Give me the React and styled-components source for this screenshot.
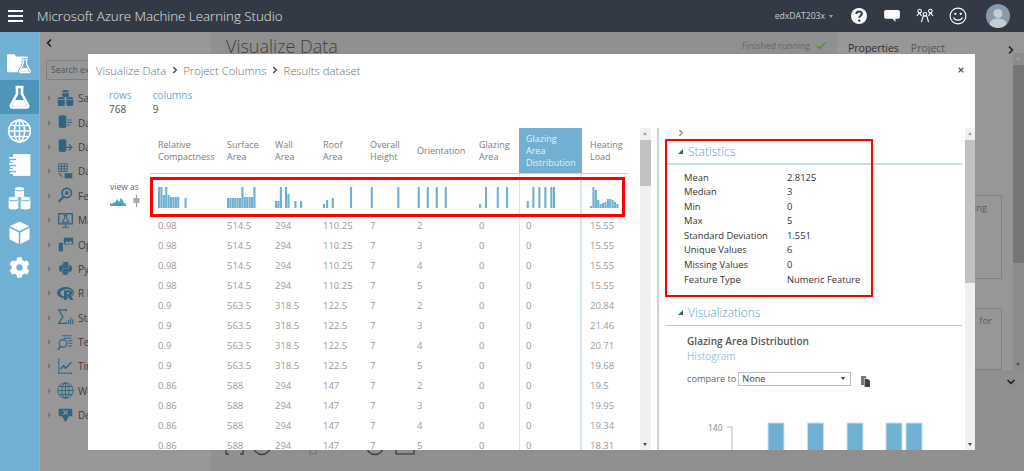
import styled, { createGlobalStyle } from "styled-components";
import { FaCog, FaPython, FaRProject } from "react-icons/fa";
import { ChevronLeft, ChevronRight, ChevronDown, Check, X } from "lucide-react";

const GlobalStyle = createGlobalStyle`
  html, body { margin: 0; padding: 0; height: 100%; overflow: hidden; background: #8f8f8f; }
  body { font-family: "Open Sans", "Liberation Sans", sans-serif; }
  #root { height: 100%; }
`;

// shared column widths of the results table: gutter + 9 columns
const TABLE_COLUMNS = "62px 69px 48px 48px 47px 47px 62px 48px 63px 47px";

const columns = [
  { name: ["Relative", "Compactness"], bars: [[0, 21], [2.4, 21], [4.8, 13], [7.2, 21], [9.6, 13], [12, 11], [14.4, 11], [16.8, 11], [19.2, 11], [26.5, 10]] },
  { name: ["Surface", "Area"], bars: [[0, 10], [2.4, 10], [4.8, 10], [7.2, 10], [9.6, 10], [12, 10], [14.4, 21], [16.8, 11], [19.2, 11], [21.6, 11], [24, 11], [26.4, 21]] },
  { name: ["Wall", "Area"], bars: [[0, 7], [2.4, 7], [4.8, 21], [10, 21], [12.4, 14], [19.4, 7], [25, 7]] },
  { name: ["Roof", "Area"], bars: [[0, 4], [3, 8], [8.7, 10], [27, 21]] },
  { name: ["Overall", "Height"], bars: [[0.7, 21], [27.3, 21]] },
  { name: ["Orientation"], bars: [[0.7, 21], [9.7, 21], [18.7, 21], [27.7, 21]] },
  { name: ["Glazing", "Area"], bars: [[0, 4], [6, 21], [17.7, 21], [27, 21]] },
  { name: ["Glazing", "Area", "Distribution"], selected: true, bars: [[0.7, 7], [6.3, 21], [12.3, 21], [18.3, 21], [24.3, 21], [26.9, 21]] },
  { name: ["Heating", "Load"], bars: [[0, 2], [2.4, 21], [4.8, 18], [7.2, 8], [9.6, 4], [12, 5], [14.4, 6], [16.8, 9], [19.2, 9], [21.6, 8], [24, 6], [26.4, 4]] },
];

const rows = [
  ["0.98", "514.5", "294", "110.25", "7", "2", "0", "0", "15.55"],
  ["0.98", "514.5", "294", "110.25", "7", "3", "0", "0", "15.55"],
  ["0.98", "514.5", "294", "110.25", "7", "4", "0", "0", "15.55"],
  ["0.98", "514.5", "294", "110.25", "7", "5", "0", "0", "15.55"],
  ["0.9", "563.5", "318.5", "122.5", "7", "2", "0", "0", "20.84"],
  ["0.9", "563.5", "318.5", "122.5", "7", "3", "0", "0", "21.46"],
  ["0.9", "563.5", "318.5", "122.5", "7", "4", "0", "0", "20.71"],
  ["0.9", "563.5", "318.5", "122.5", "7", "5", "0", "0", "19.68"],
  ["0.86", "588", "294", "147", "7", "2", "0", "0", "19.5"],
  ["0.86", "588", "294", "147", "7", "3", "0", "0", "19.95"],
  ["0.86", "588", "294", "147", "7", "4", "0", "0", "19.34"],
  ["0.86", "588", "294", "147", "7", "5", "0", "0", "18.31"],
];

const statistics = [
  ["Mean", "2.8125"],
  ["Median", "3"],
  ["Min", "0"],
  ["Max", "5"],
  ["Standard Deviation", "1.551"],
  ["Unique Values", "6"],
  ["Missing Values", "0"],
  ["Feature Type", "Numeric Feature"],
];

const Cylinders = () => (
  <svg viewBox="0 0 22 22" width="100%" height="100%" fill="currentColor">
    <ellipse cx="11" cy="1.600" rx="4.200" ry="1.500" />
    <path d="M6.800 2.800c0 1.700 8.400 1.700 8.400 0v5.400c0 1.500-8.400 1.500-8.400 0z" />
    <ellipse cx="5.500" cy="10.500" rx="4.500" ry="1.600" />
    <path d="M1 11.800c0 1.800 9 1.800 9 0v7.500c0 1.800-9 1.800-9 0z" />
    <ellipse cx="16.500" cy="10.500" rx="4.500" ry="1.600" />
    <path d="M12 11.800c0 1.800 9 1.800 9 0v7.500c0 1.800-9 1.800-9 0z" />
  </svg>
);

const FlaskShape = () => (
  <svg viewBox="0 0 22 24" width="100%" height="100%">
    <path d="M7 2h8M8.500 2v7L2.500 20c-.7 1.400 0 2.500 1.500 2.500h14c1.500 0 2.200-1.100 1.500-2.500L13.500 9V2" fill="none" stroke="currentColor" strokeWidth="2.600" strokeLinejoin="round" />
    <path d="M6.500 15h9l3 6.500H3.500z" fill="currentColor" />
  </svg>
);

const FolderFlask = () => (
  <svg viewBox="0 0 27 21" width="100%" height="100%" fill="currentColor">
    <path d="M0 2.500C0 1.500.7 1 1.500 1H8l2 2.500h11c1 0 1.500.6 1.500 1.500v14c0 .8-.6 1.500-1.500 1.500H1.500C.6 20.500 0 19.800 0 19z" />
    <path d="M16 7h6M17.500 7v4.500l-4 7.500c-.5 1 0 1.800 1 1.800h9.500c1 0 1.500-.8 1-1.800l-4-7.500V7" fill="#6fb0d3" stroke="#6fb0d3" strokeWidth="3.200" />
    <path d="M16 7h6M17.500 7v4.500l-4 7.500c-.5 1 0 1.800 1 1.800h9.500c1 0 1.500-.8 1-1.800l-4-7.500V7" fill="none" stroke="currentColor" strokeWidth="1.300" />
    <path d="M16 16h6l2 4h-10z" />
  </svg>
);

const GlobeLines = ({ weight = 1.700 }) => (
  <svg viewBox="0 0 26 26" width="100%" height="100%" fill="none" stroke="currentColor" strokeWidth={weight}>
    <circle cx="13" cy="13" r="11.800" />
    <ellipse cx="13" cy="13" rx="5.500" ry="11.800" />
    <path d="M13 1v24M1.200 13h23.600M3 7h20M3 19h20" />
  </svg>
);

const Notebook = () => (
  <svg viewBox="0 0 22 22" width="100%" height="100%">
    <path d="M5 1h16v20H5z" fill="currentColor" />
    <path d="M1.500 4.500h6c1.500 0 1.500 3 0 3h-5M1.500 10h6c1.500 0 1.500 3 0 3h-5M1.500 15.500h6c1.500 0 1.500 3 0 3h-5" fill="#6fb0d3" stroke="currentColor" strokeWidth="1.600" />
  </svg>
);

const Cube = () => (
  <svg viewBox="0 0 22 25" width="100%" height="100%" fill="currentColor">
    <path d="M11 .5l10 5-10 5-10-5z" />
    <path d="M.5 7l9.700 5v12L.5 19zM21.500 7l-9.700 5v12l9.700-5z" />
  </svg>
);

const CopyPages = () => (
  <svg viewBox="0 0 9 11" width="9" height="11">
    <path d="M0 0h4.500l1 1v1.500H3V9H0z" fill="#777" />
    <path d="M3.500 3H7l2 2v6H3.500z" fill="#444" />
  </svg>
);

const PaletteIcon = ({ kind }) => {
  if (kind === "cylinders") return <Cylinders />;
  if (kind === "python") return <FaPython size={15} />;
  if (kind === "r") return <FaRProject size={17} />;
  if (kind === "globe") return <GlobeLines weight={1.500} />;
  const shapes = {
    lines: <><path d="M2 3c0-2 9-2 9 0v12c0 2-9 2-9 0z" fill="currentColor" /><path d="M12 7h5M12 10h6M12 13h4" stroke="currentColor" strokeWidth="1.300" /></>,
    arrow: <><path d="M2 3c0-2 9-2 9 0v12c0 2-9 2-9 0z" fill="currentColor" /><path d="M10 11h7M14 7.500l3.500 3.500-3.500 3.500" fill="none" stroke="currentColor" strokeWidth="1.500" /></>,
    table: <><path d="M2 1h10v9H2zM2 4h10M2 7h10M5.300 1v9M8.600 1v9" fill="none" stroke="currentColor" strokeWidth="1" /><path d="M9 12h9v6H9z" fill="currentColor" /><path d="M2 12l4 4" stroke="currentColor" strokeWidth="1.400" /></>,
    search: <><circle cx="11.500" cy="7" r="5.500" fill="none" stroke="currentColor" strokeWidth="2" /><circle cx="11.500" cy="7" r="2.200" fill="currentColor" /><path d="M7.500 11.500L2 17.500" stroke="currentColor" strokeWidth="2.600" /></>,
    monitor: <><path d="M2 2h16v12H2z" fill="none" stroke="currentColor" strokeWidth="1.600" /><path d="M8 4h4M9 4v3l-3 5h8l-3-5V4M10 14v3M6 18h8" fill="none" stroke="currentColor" strokeWidth="1.300" /></>,
    phone: <><path d="M2 8h5v10H2z" fill="currentColor" /><path d="M8 2h11v8H8z" fill="currentColor" /><path d="M9 9l3-3 2 2 2-3 2 4z" fill="#979797" /></>,
    sigma: <><path d="M11 3V1H2l5 8-5 8h9v-2" fill="none" stroke="currentColor" strokeWidth="1.500" /><path d="M13 13h1.300v5H13zM15.500 10h1.300v8h-1.300zM18 12h1.300v6H18z" fill="currentColor" /></>,
    text: <><circle cx="7" cy="11" r="4.500" fill="none" stroke="currentColor" strokeWidth="1.500" /><path d="M4 15l-3 3.500" stroke="currentColor" strokeWidth="2" /><path d="M6 2h11M8 5h9M13 8h5M13 11h5M13 14h5" stroke="currentColor" strokeWidth="1.200" /></>,
    chart: <><path d="M2 1v17h16" fill="none" stroke="currentColor" strokeWidth="1.600" strokeDasharray="2 .8" /><path d="M4 13l4-4 2 3 7-7" fill="none" stroke="currentColor" strokeWidth="1.800" /></>,
    shield: <><path d="M2 2h16v9h-4l-4 7-4-7H2z" fill="currentColor" /><path d="M7.500 4l5 5M12.500 4l-5 5" stroke="#979797" strokeWidth="1.500" /></>,
  };
  return <svg viewBox="0 0 20 20" width="100%" height="100%">{shapes[kind]}</svg>;
};

// only the part of each label left of the modal is readable in the picture
const paletteItems = [
  ["cylinders", "Sa"],
  ["lines", "Da"],
  ["arrow", "Da"],
  ["table", "Da"],
  ["search", "Fe"],
  ["monitor", "Ma"],
  ["phone", "Op"],
  ["python", "Py"],
  ["r", "R L"],
  ["sigma", "Sta"],
  ["text", "Tex"],
  ["chart", "Tim"],
  ["globe", "We"],
  ["shield", "De"],
];

const railItems = [
  [<FolderFlask key="a" />, false],
  [<FlaskShape key="b" />, true],
  [<GlobeLines key="c" />, false],
  [<Notebook key="d" />, false],
  [<Cylinders key="e" />, false],
  [<Cube key="f" />, false],
  [<FaCog key="g" size={21} />, false],
];

function Histogram({ bars }) {
  return (
    <svg width="31" height="21" viewBox="0 0 31 21">
      {bars.map(([x, h]) => (
        <rect key={x} x={x} y={21 - h} width="2.100" height={h} fill="#6eafd2" />
      ))}
    </svg>
  );
}

function Scrollbar({ $thumbTop, $thumbHeight, $width }) {
  return (
    <ScrollTrack $width={$width}>
      <UpArrow />
      <ScrollThumb $top={$thumbTop} $height={$thumbHeight} />
      <DownArrow />
    </ScrollTrack>
  );
}

export default function App() {
  return (
    <>
      <GlobalStyle />
      <Page>
        <TopBar>
          <Burger><span /><span /><span /></Burger>
          <AppTitle>Microsoft Azure Machine Learning Studio</AppTitle>
          <Account>edxDAT203x</Account>
          <Caret />
          <TopIcons>
            <TopIcon>
              <svg viewBox="0 0 18 18" width="18" height="18">
                <circle cx="9" cy="9" r="8" fill="#fff" />
                <path d="M6.300 7c0-3.400 5.600-3.400 5.600-.3 0 2-2.700 2-2.700 4" fill="none" stroke="#323a45" strokeWidth="2" />
                <circle cx="9.200" cy="13.500" r="1.200" fill="#323a45" />
              </svg>
            </TopIcon>
            <TopIcon>
              <svg viewBox="0 0 18 16" width="16" height="14">
                <path d="M2 1h14c1 0 2 .8 2 2v6c0 1-1 2-2 2h-3v3.500L9.500 11H2c-1 0-2-1-2-2V3c0-1.200 1-2 2-2z" fill="#fff" />
              </svg>
            </TopIcon>
            <TopIcon>
              <svg viewBox="0 0 20 18" width="18" height="16" fill="none" stroke="#fff" strokeWidth="1.200">
                <circle cx="4" cy="3.500" r="2" /><circle cx="10" cy="7" r="2" /><circle cx="16" cy="3.500" r="2" />
                <path d="M4 5.500L6 9M16 5.500L14 9M8 9l-2 7M12 9l2 7M8.500 9h3M1 9l2.500-3.500M19 9l-2.500-3.500" />
              </svg>
            </TopIcon>
            <TopIcon>
              <svg viewBox="0 0 18 18" width="18" height="18" fill="none" stroke="#fff" strokeWidth="1.100">
                <circle cx="9" cy="9" r="7.900" />
                <path d="M4.500 10.500c1.500 3.500 7.500 3.500 9 0" />
                <circle cx="6.300" cy="6.800" r=".6" fill="#fff" /><circle cx="11.700" cy="6.800" r=".6" fill="#fff" />
              </svg>
            </TopIcon>
          </TopIcons>
          <Avatar>
            <svg viewBox="0 0 24 24" width="24" height="24">
              <circle cx="12" cy="9.500" r="4.500" fill="#c6ccd4" />
              <path d="M3.500 21c0-4.500 4-6.500 8.500-6.500s8.500 2 8.500 6.500c-2 1.800-5 3-8.500 3s-6.500-1.200-8.500-3z" fill="#c6ccd4" />
            </svg>
          </Avatar>
        </TopBar>

        <Workspace>
          <Rail>
            {railItems.map(([icon, active], i) => (
              <RailItem key={i} $active={active}>
                <RailGlyph>{icon}</RailGlyph>
              </RailItem>
            ))}
          </Rail>

          <Palette>
            <PaletteCollapse><ChevronLeft size={12} strokeWidth={3.500} /></PaletteCollapse>
            <PaletteSearch>Search ex</PaletteSearch>
            <PaletteList>
              {paletteItems.map(([kind, label]) => (
                <PaletteRow key={kind}>
                  <PaletteTriangle />
                  <PaletteGlyph><PaletteIcon kind={kind} /></PaletteGlyph>
                  <span>{label}</span>
                </PaletteRow>
              ))}
            </PaletteList>
          </Palette>

          <Canvas>
            <CanvasHead>
              <CanvasTitle>Visualize Data</CanvasTitle>
              <RunStatus>Finished running</RunStatus>
              <Check size={12} strokeWidth={3.500} color="#5f8f33" />
            </CanvasHead>
            <CanvasTools>
              <svg viewBox="0 0 200 20" width="200" height="20" fill="none" stroke="#3f3f3f" strokeWidth="1.300">
                <path d="M1 4v14h3M15 18h3V4" />
                <circle cx="37" cy="10" r="8.500" />
                <rect x="85" y="8" width="6" height="10" stroke="#777" />
                <circle cx="150" cy="10" r="8.500" />
                <rect x="171" y="4" width="18" height="14" />
              </svg>
            </CanvasTools>
          </Canvas>

          <SideColumn>
            <SidePanel>
              <SideTabs>
                <SideTab $active>Properties</SideTab>
                <SideTab>Project</SideTab>
                <SideChevron><ChevronRight size={12} strokeWidth={3.500} /></SideChevron>
              </SideTabs>
              <SideScroller>
                <SideBody>
                  <SideCard $height={84} $gap={142} $inset={14}>ing</SideCard>
                  <SideCard $height={62} $gap={29} $inset={9}>for</SideCard>
                </SideBody>
                <Scrollbar $width={11} $thumbTop={1} $thumbHeight={198} />
              </SideScroller>
            </SidePanel>
            <SideFoot><ChevronDown size={12} strokeWidth={3.500} /></SideFoot>
          </SideColumn>
        </Workspace>

        <Modal>
          <ModalHead>
            <Crumb>Visualize Data</Crumb>
            <CrumbArrow><ChevronRight size={10} strokeWidth={3.500} /></CrumbArrow>
            <Crumb>Project Columns</Crumb>
            <CrumbArrow><ChevronRight size={10} strokeWidth={3.500} /></CrumbArrow>
            <Crumb>Results dataset</Crumb>
            <CloseButton><X size={8} strokeWidth={3.500} /></CloseButton>
          </ModalHead>
          <Counts>
            <Count>
              <CountLabel>rows</CountLabel>
              <CountValue>768</CountValue>
            </Count>
            <Count>
              <CountLabel>columns</CountLabel>
              <CountValue>9</CountValue>
            </Count>
          </Counts>

          <ModalBody>
            <TablePane>
              <TableRow>
                <span />
                {columns.map((c) => (
                  <HeadCell key={c.name.join(" ")} $selected={c.selected}>
                    <div>{c.name.map((line) => <div key={line}>{line}</div>)}</div>
                  </HeadCell>
                ))}
              </TableRow>
              <TableRow>
                <ViewAs>
                  <ViewAsLabel>view as</ViewAsLabel>
                  <ViewAsIcons>
                    <svg viewBox="0 0 16 9" width="16" height="9">
                      <path d="M0 9V6l2 1 2-2 1 1 2-4 2 3 2-4 2 3 1 2 2 1v2z" fill="#4f9fcc" />
                    </svg>
                    <svg viewBox="0 0 7 12" width="7" height="12">
                      <path d="M3.500 0v12" stroke="#999" />
                      <rect x="0.500" y="3" width="6" height="5" fill="#aaa" />
                    </svg>
                  </ViewAsIcons>
                </ViewAs>
                {columns.map((c) => (
                  <BarCell key={c.name.join(" ")} $selected={c.selected}>
                    <Histogram bars={c.bars} />
                  </BarCell>
                ))}
              </TableRow>
              {rows.map((row, i) => (
                <TableRow key={i}>
                  <span />
                  {row.map((value, j) => (
                    <DataCell key={j} $selected={columns[j].selected}>{value}</DataCell>
                  ))}
                </TableRow>
              ))}
              <ColumnsHighlight />
            </TablePane>

            <Scrollbar $width={11} $thumbTop={1} $thumbHeight={46} />
            <PaneDivider />

            <DetailPane>
              <DetailChevron><ChevronRight size={10} strokeWidth={3} /></DetailChevron>
              <SectionHead>
                <SectionTriangle />
                <SectionTitle>Statistics</SectionTitle>
              </SectionHead>
              <StatList>
                {statistics.map(([label, value]) => (
                  <StatRow key={label}>
                    <span>{label}</span>
                    <span>{value}</span>
                  </StatRow>
                ))}
              </StatList>
              <SectionHead $strong>
                <SectionTriangle />
                <SectionTitle>Visualizations</SectionTitle>
              </SectionHead>
              <VizBlock>
                <VizName>Glazing Area Distribution</VizName>
                <VizKind>Histogram</VizKind>
                <CompareRow>
                  <span>compare to</span>
                  <CompareSelect>
                    None
                    <SelectCaret />
                  </CompareSelect>
                  <CopyIcon><CopyPages /></CopyIcon>
                </CompareRow>
                <ChartArea>
                  <AxisLabel>140</AxisLabel>
                  <svg viewBox="0 0 210 30" width="210" height="30">
                    <path d="M0 5h5M5 5v25" stroke="#bbb" fill="none" />
                    {[41, 80.500, 120, 159, 179].map((x) => (
                      <rect key={x} x={x} y="1" width="16" height="29" fill="#6fb0d3" stroke="#c9e2f0" />
                    ))}
                  </svg>
                </ChartArea>
              </VizBlock>
              <StatsHighlight />
            </DetailPane>

            <Scrollbar $width={10} $thumbTop={1} $thumbHeight={143} />
          </ModalBody>
        </Modal>
      </Page>
    </>
  );
}

const Page = styled.div`
  position: relative;
  width: 1024px;
  height: 471px;
  overflow: hidden;
  display: flex;
  flex-direction: column;
  background: #8f8f8f;
`;

const TopBar = styled.header`
  height: 32px;
  flex: none;
  display: flex;
  align-items: center;
  background: #333a45;
  color: #fff;
`;

const Burger = styled.div`
  width: 15px;
  margin-left: 8px;
  display: flex;
  flex-direction: column;
  gap: 3px;

  span {
    display: block;
    height: 2px;
    background: #fff;
  }
`;

const AppTitle = styled.div`
  margin-left: 14px;
  font-size: 13.3px;
  font-weight: 300;
  color: #e4e6e8;
  white-space: nowrap;
`;

const Account = styled.div`
  margin-left: auto;
  font-size: 8.6px;
  color: #c9ccd0;
`;

const Caret = styled.span`
  margin-left: 4px;
  border-left: 2.5px solid transparent;
  border-right: 2.5px solid transparent;
  border-top: 3px solid #9aa0a8;
`;

const TopIcons = styled.div`
  display: flex;
  margin-left: 9px;
`;

const TopIcon = styled.div`
  width: 33px;
  display: flex;
  justify-content: center;
  align-items: center;
`;

const Avatar = styled.div`
  width: 24px;
  height: 24px;
  margin: 0 14px 0 12px;
  border-radius: 50%;
  overflow: hidden;
  background: #8799ad;
`;

const Workspace = styled.div`
  flex: 1;
  min-height: 0;
  display: flex;
`;

const Rail = styled.nav`
  width: 39px;
  flex: none;
  padding-top: 14px;
  background: #6fb0d3;
  border-right: 1px solid #a9a9a9;
`;

const RailItem = styled.div`
  height: 34px;
  display: flex;
  align-items: center;
  justify-content: center;
  color: #fff;
  background: ${({ $active }) => ($active ? "#4f94b9" : "transparent")};
`;

const RailGlyph = styled.div`
  width: 25px;
  height: 24px;
  display: flex;
  align-items: center;
  justify-content: center;
`;

const Palette = styled.aside`
  width: 171px;
  flex: none;
  padding: 5px 0 0 6px;
  box-sizing: border-box;
  background: #979797;
  color: #3e3e3e;
  font-size: 10px;
  overflow: hidden;
`;

const PaletteCollapse = styled.div`
  height: 12px;
  color: #222;
  margin-left: -3px;
`;

const PaletteSearch = styled.div`
  height: 20px;
  margin-top: 11px;
  padding-left: 4px;
  line-height: 18px;
  width: 155px;
  box-sizing: border-box;
  border: 1px solid #808080;
  color: #555;
  font-size: 8.5px;
  white-space: nowrap;
`;

const PaletteList = styled.div`
  margin-top: 6px;
`;

const PaletteRow = styled.div`
  height: 24.4px;
  display: flex;
  align-items: center;
  white-space: nowrap;
`;

const PaletteTriangle = styled.span`
  border-top: 3px solid transparent;
  border-bottom: 3px solid transparent;
  border-left: 3px solid #787878;
  margin-left: 2px;
`;

const PaletteGlyph = styled.div`
  width: 17px;
  height: 17px;
  margin: 0 4px 0 6px;
  color: #33647f;
  display: flex;
  align-items: center;
  justify-content: center;
`;

const Canvas = styled.main`
  width: 626px;
  flex: none;
  display: flex;
  flex-direction: column;
  background: #8f8f8f;
`;

const CanvasHead = styled.div`
  display: flex;
  align-items: center;
  padding: 2px 10px 0 15px;
`;

const CanvasTitle = styled.h1`
  margin: 0;
  font-size: 18px;
  font-weight: 300;
  color: #3f3f3f;
`;

const RunStatus = styled.span`
  margin: 0 5px 0 auto;
  font-size: 8.7px;
  color: #666;
`;

const CanvasTools = styled.div`
  margin: auto 0 15px 14px;
  height: 20px;
`;

const SideColumn = styled.div`
  flex: 1;
  display: flex;
  flex-direction: column;
`;

const SidePanel = styled.div`
  height: 338px;
  display: flex;
  flex-direction: column;
  background: #979797;
`;

const SideTabs = styled.div`
  display: flex;
  align-items: center;
  height: 21px;
  flex: none;
  padding: 10px 7px 0 11px;
  box-sizing: border-box;
  gap: 12px;
`;

const SideTab = styled.span`
  font-size: 10.5px;
  color: ${({ $active }) => ($active ? "#2e2e2e" : "#555")};
`;

const SideChevron = styled.span`
  margin: -5px 0 0 auto;
  color: #222;
  height: 12px;
`;

const SideScroller = styled.div`
  flex: 1;
  min-height: 0;
  display: flex;
`;

const SideBody = styled.div`
  flex: 1;
  min-width: 0;
`;

const SideCard = styled.div`
  height: ${({ $height }) => $height}px;
  margin: ${({ $gap }) => $gap}px 11px 0 -10px;
  box-sizing: border-box;
  border: 1px solid #808080;
  padding: 5px ${({ $inset }) => $inset}px 0 0;
  text-align: right;
  font-size: 9.5px;
  color: #5a5a5a;
`;

const SideFoot = styled.div`
  display: flex;
  justify-content: flex-end;
  padding: 6px 7px 0 0;
  color: #222;
`;

const ScrollTrack = styled.div`
  position: relative;
  width: ${({ $width }) => $width}px;
  flex: none;
  padding: 11px 0;
  box-sizing: border-box;
  background: #f0f0f0;

  ${SidePanel} & {
    background: #8c8c8c;
  }
`;

const ScrollThumb = styled.div`
  height: ${({ $height }) => $height}px;
  margin-top: ${({ $top }) => $top}px;
  background: #c2c2c2;

  ${SidePanel} & {
    background: #767676;
  }
`;

const UpArrow = styled.span`
  position: absolute;
  top: 4px;
  left: 50%;
  margin-left: -2.5px;
  border-left: 2.5px solid transparent;
  border-right: 2.5px solid transparent;
  border-bottom: 3px solid #a3a3a3;
`;

const DownArrow = styled.span`
  position: absolute;
  bottom: 4px;
  left: 50%;
  margin-left: -2.5px;
  border-left: 2.5px solid transparent;
  border-right: 2.5px solid transparent;
  border-top: 3px solid #505050;
`;

const Modal = styled.section`
  position: absolute;
  top: 54px;
  left: 88px;
  width: 887px;
  height: 396px;
  display: flex;
  flex-direction: column;
  background: #fff;
  overflow: hidden;
`;

const ModalHead = styled.div`
  height: 32px;
  flex: none;
  padding-left: 8px;
  display: flex;
  align-items: center;
  color: #6d6d6d;
`;

const Crumb = styled.span`
  font-size: 11.3px;
  font-weight: 300;
`;

const CrumbArrow = styled.span`
  display: flex;
  margin: 0 3.5px;
  color: #444;
`;

const CloseButton = styled.span`
  margin-left: auto;
  margin-right: 10px;
  display: flex;
  color: #555;
`;

const Counts = styled.div`
  height: 42px;
  flex: none;
  box-sizing: border-box;
  padding: 2px 0 0 21px;
  display: flex;
  gap: 21px;
`;

const Count = styled.div`
  font-size: 10px;
  line-height: 14px;
`;

const CountLabel = styled.div`
  color: #6aaad0;
`;

const CountValue = styled.div`
  color: #555;
`;

const ModalBody = styled.div`
  flex: 1;
  min-height: 0;
  display: flex;
`;

const TablePane = styled.div`
  position: relative;
  width: 552px;
  flex: none;
  overflow: hidden;
`;

const TableRow = styled.div`
  display: grid;
  grid-template-columns: ${TABLE_COLUMNS};
  width: 541px;
`;

const HeadCell = styled.div`
  height: 46px;
  box-sizing: border-box;
  padding-left: ${({ $selected }) => ($selected ? "7px" : "8px")};
  display: flex;
  align-items: center;
  font-size: 9px;
  line-height: 12px;
  border-bottom: 1px solid #b9d6e6;
  color: ${({ $selected }) => ($selected ? "#e8f2f8" : "#7c7c7c")};
  background: ${({ $selected }) => ($selected ? "#72afd0" : "transparent")};
`;

const BarCell = styled.div`
  height: 42px;
  box-sizing: border-box;
  padding: 13px 0 0 8px;
  border-left: ${({ $selected }) => ($selected ? "1px solid #d3e7f2" : "none")};
  border-right: ${({ $selected }) => ($selected ? "2px solid #d3e7f2" : "none")};
  ${({ $selected }) => $selected && "padding-left: 6px;"}
`;

const DataCell = styled.div`
  height: 20px;
  line-height: 20px;
  box-sizing: border-box;
  padding-left: ${({ $selected }) => ($selected ? "6px" : "8px")};
  font-size: 9.5px;
  color: #9a9a9a;
  border-left: ${({ $selected }) => ($selected ? "1px solid #d3e7f2" : "none")};
  border-right: ${({ $selected }) => ($selected ? "2px solid #d3e7f2" : "none")};
`;

const ViewAs = styled.div`
  padding: 7px 0 0 22px;
`;

const ViewAsLabel = styled.div`
  font-size: 8.5px;
  line-height: 11px;
  color: #666;
`;

const ViewAsIcons = styled.div`
  display: flex;
  align-items: center;
  gap: 7px;
  margin-top: 3px;
`;

const ColumnsHighlight = styled.div`
  position: absolute;
  left: 62px;
  top: 49px;
  width: 475px;
  height: 40px;
  box-sizing: border-box;
  border: 3px solid #f00;
  pointer-events: none;
`;

const PaneDivider = styled.div`
  width: 2px;
  flex: none;
  margin-left: 6px;
  background: #d2d2d2;
`;

const DetailPane = styled.div`
  position: relative;
  flex: 1;
  min-width: 0;
  padding-left: 7px;
  overflow: hidden;
`;

const DetailChevron = styled.div`
  display: flex;
  height: 11px;
  margin-left: 10px;
  color: #888;
`;

const SectionHead = styled.div`
  height: 26px;
  margin-right: 3px;
  display: flex;
  align-items: center;
  gap: 5px;
  padding-left: 12px;
  box-sizing: border-box;
  border-bottom: ${({ $strong }) => ($strong ? "1px solid #9fcfe0" : "2px solid #c2e2ee")};
`;

const SectionTriangle = styled.span`
  width: 0;
  height: 0;
  border-bottom: 5px solid #2d5f7f;
  border-left: 5px solid transparent;
`;

const SectionTitle = styled.span`
  font-size: 12px;
  font-weight: 300;
  color: #5ca4cb;
`;

const StatList = styled.div`
  padding: 5.5px 0 12.5px 18px;
`;

const StatRow = styled.div`
  display: grid;
  grid-template-columns: 103px 1fr;
  height: 14.6px;
  line-height: 14.6px;
  font-size: 9.4px;
  color: #333;
`;

const VizBlock = styled.div`
  padding: 8px 0 0 21px;
`;

const VizName = styled.div`
  font-size: 10.1px;
  line-height: 14px;
  font-weight: 600;
  color: #555;
`;

const VizKind = styled.div`
  font-size: 10px;
  line-height: 16px;
  color: #a3c4e4;
`;

const CompareRow = styled.div`
  margin-top: 7px;
  display: flex;
  align-items: center;
  font-size: 9.2px;
  color: #666;
`;

const CompareSelect = styled.div`
  position: relative;
  width: 113px;
  height: 14px;
  margin-left: 2px;
  box-sizing: border-box;
  padding-left: 3px;
  line-height: 12px;
  border: 1px solid #bdbdbd;
  color: #444;
`;

const SelectCaret = styled.span`
  position: absolute;
  right: 5px;
  top: 4px;
  border-left: 2.5px solid transparent;
  border-right: 2.5px solid transparent;
  border-top: 3.5px solid #333;
`;

const CopyIcon = styled.span`
  display: flex;
  margin: 5px 0 0 10px;
`;

const ChartArea = styled.div`
  margin-top: 35px;
  margin-left: -1px;
  display: flex;
  align-items: flex-start;
`;

const AxisLabel = styled.span`
  margin: 1px 4px 0 22px;
  font-size: 8.5px;
  line-height: 10px;
  color: #888;
`;

const StatsHighlight = styled.div`
  position: absolute;
  left: 6px;
  top: 11px;
  width: 208px;
  height: 158px;
  box-sizing: border-box;
  border: 2px solid #f00;
  pointer-events: none;
`;
